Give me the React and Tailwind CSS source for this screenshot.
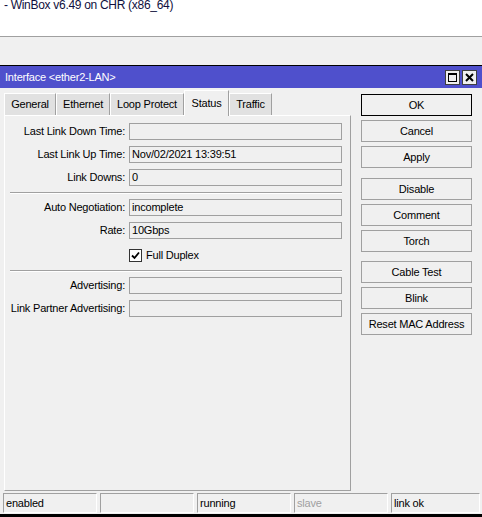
import React from "react";

const font = { fontFamily: '"Liberation Sans", Arial, sans-serif' };

function Field({ label, value, mt }) {
  return (
    <div className={`flex items-center h-[17px] ${mt}`}>
      <div className="w-[120px] text-right whitespace-nowrap tracking-[-0.2px]">{label}</div>
      <div className="ml-[4px] w-[213px] h-[17px] border border-[#a0a0a0] bg-[#f0f0f0] flex items-center pl-[2px] tracking-[-0.2px] whitespace-nowrap">
        {value}
      </div>
    </div>
  );
}

function Sep({ mt }) {
  return (
    <div className={`ml-[5px] w-[332px] ${mt}`}>
      <div className="h-px bg-[#a0a0a0]" />
      <div className="h-px bg-white" />
    </div>
  );
}

function Btn({ children, primary, mt }) {
  return (
    <div
      className={`w-[111px] h-[22px] flex items-center justify-center bg-[#f0f0f0] border tracking-[-0.2px] ${
        primary ? "border-black" : "border-[#a0a0a0]"
      } ${mt}`}
    >
      {children}
    </div>
  );
}

function Tab({ children, active, w }) {
  if (active) {
    return (
      <div
        className={`${w} h-[26px] -mb-px relative z-10 bg-[#f0f0f0] border-l border-t border-r border-l-white border-t-white border-r-[#a0a0a0] flex items-start justify-center pt-[4px] tracking-[-0.2px]`}
      >
        {children}
      </div>
    );
  }
  return (
    <div
      className={`${w} h-[22px] bg-[#e1e1e1] border-l border-t border-r border-l-white border-t-white border-r-[#a0a0a0] flex items-center justify-center tracking-[-0.2px]`}
    >
      {children}
    </div>
  );
}

function Cell({ children, w, gray }) {
  return (
    <div
      className={`${w} h-[20px] border-l border-t border-l-[#a0a0a0] border-t-[#a0a0a0] border-r border-b border-r-white border-b-white flex items-center pl-[2px] tracking-[-0.2px] ${
        gray ? "text-[#a0a0a0]" : "text-black"
      }`}
    >
      {children}
    </div>
  );
}

export default function App() {
  return (
    <div className="w-[482px] h-[517px] overflow-hidden bg-white text-[11px] text-black" style={font}>
      <div className="h-[37px] bg-white overflow-hidden border-b border-[#a0a0a0]">
        <div className="pl-[4px] -mt-[1px] text-[12px] text-[#101040] tracking-[-0.3px] leading-[12px]">
          - WinBox v6.49 on CHR (x86_64)
        </div>
      </div>
      <div className="h-[28px] bg-[#f0f0f0]" />
      <div className="h-px bg-black" />
      <div className="h-[22px] bg-[#4f50cc] flex items-center pl-[5px] pr-[5px] text-white">
        <span className="tracking-[-0.2px]">Interface &lt;ether2-LAN&gt;</span>
        <div className="ml-auto flex gap-[2px]">
          <div className="w-[15px] h-[15px] bg-[#f0f0f0] border border-[#404040] flex items-center justify-center">
            <div className="w-[9px] h-[9px] border border-black border-t-2" />
          </div>
          <div className="w-[15px] h-[15px] bg-[#f0f0f0] border border-[#404040] flex items-center justify-center">
            <svg width="9" height="9" viewBox="0 0 9 9">
              <path d="M1 1 L8 8 M8 1 L1 8" stroke="black" strokeWidth="2" />
            </svg>
          </div>
        </div>
      </div>
      <div className="h-[426px] bg-[#f0f0f0] flex flex-col">
        <div className="flex">
          <div className="ml-[4px] w-[347px] flex flex-col pt-[2px]">
            <div className="flex items-end h-[25px]">
              <Tab w="w-[52px]">General</Tab>
              <Tab w="w-[54px]">Ethernet</Tab>
              <Tab w="w-[74px]">Loop Protect</Tab>
              <Tab w="w-[45px]" active>Status</Tab>
              <Tab w="w-[43px]">Traffic</Tab>
            </div>
            <div className="h-[376px] border-l border-t border-l-white border-t-white border-r border-b border-r-[#a0a0a0] border-b-[#a0a0a0] flex flex-col">
              <Field label="Last Link Down Time:" value="" mt="mt-[7px]" />
              <Field label="Last Link Up Time:" value="Nov/02/2021 13:39:51" mt="mt-[6px]" />
              <Field label="Link Downs:" value="0" mt="mt-[6px]" />
              <Sep mt="mt-[6px]" />
              <Field label="Auto Negotiation:" value="incomplete" mt="mt-[5px]" />
              <Field label="Rate:" value="10Gbps" mt="mt-[6px]" />
              <div className="flex items-center mt-[9px] h-[14px] ml-[124px]">
                <div className="w-[13px] h-[13px] bg-white border border-[#333] flex items-center justify-center">
                  <svg width="9" height="9" viewBox="0 0 9 9">
                    <path d="M1 4.5 L3.5 7 L8 1.5" stroke="black" strokeWidth="1.8" fill="none" />
                  </svg>
                </div>
                <span className="ml-[4px] tracking-[-0.2px]">Full Duplex</span>
              </div>
              <Sep mt="mt-[8px]" />
              <Field label="Advertising:" value="" mt="mt-[5px]" />
              <Field label="Link Partner Advertising:" value="" mt="mt-[6px]" />
            </div>
          </div>
          <div className="ml-[10px] pt-[6px] flex flex-col">
            <Btn primary>OK</Btn>
            <Btn mt="mt-[4px]">Cancel</Btn>
            <Btn mt="mt-[4px]">Apply</Btn>
            <Btn mt="mt-[10px]">Disable</Btn>
            <Btn mt="mt-[4px]">Comment</Btn>
            <Btn mt="mt-[4px]">Torch</Btn>
            <Btn mt="mt-[9px]">Cable Test</Btn>
            <Btn mt="mt-[4px]">Blink</Btn>
            <Btn mt="mt-[4px]">Reset MAC Address</Btn>
          </div>
        </div>
        <div className="mt-[2px] ml-[3px] flex gap-[3px]">
          <Cell w="w-[94px]">enabled</Cell>
          <Cell w="w-[94px]"></Cell>
          <Cell w="w-[94px]">running</Cell>
          <Cell w="w-[94px]" gray>slave</Cell>
          <Cell w="w-[89px]">link ok</Cell>
        </div>
      </div>
      <div className="h-[3px] bg-black" />
    </div>
  );
}
